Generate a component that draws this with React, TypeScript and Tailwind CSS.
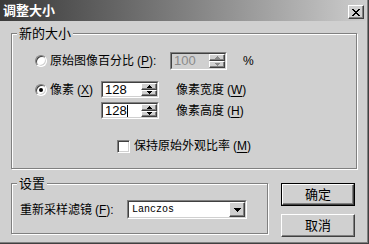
import React from 'react';

function Arrow({ down, color }: { down?: boolean; color: string }) {
  return (
    <svg width="5" height="3" viewBox="0 0 5 3" className="block" shapeRendering="crispEdges">
      {down ? (
        <>
          <rect x="0" y="0" width="5" height="1" fill={color} />
          <rect x="1" y="1" width="3" height="1" fill={color} />
          <rect x="2" y="2" width="1" height="1" fill={color} />
        </>
      ) : (
        <>
          <rect x="2" y="0" width="1" height="1" fill={color} />
          <rect x="1" y="1" width="3" height="1" fill={color} />
          <rect x="0" y="2" width="5" height="1" fill={color} />
        </>
      )}
    </svg>
  );
}

function Spin({ disabled }: { disabled?: boolean }) {
  const c = disabled ? '#8a8a8a' : '#000000';
  return (
    <div className="flex flex-col w-[16px] shrink-0">
      <div className="flex-1 flex items-center justify-center bg-[#d0d0d0] border border-t-white border-l-white border-b-[#404040] border-r-[#404040] shadow-[inset_-1px_-1px_0_#808080]">
        <Arrow color={c} />
      </div>
      <div className="flex-1 flex items-center justify-center bg-[#d0d0d0] border border-t-white border-l-white border-b-[#404040] border-r-[#404040] shadow-[inset_-1px_-1px_0_#808080]">
        <Arrow down color={c} />
      </div>
    </div>
  );
}

function Field({ className, inner, children }: { className: string; inner: string; children: React.ReactNode }) {
  return (
    <div className={`flex shrink-0 border border-t-[#808080] border-l-[#808080] border-b-white border-r-white ${className}`}>
      <div className={`flex flex-1 min-w-0 border border-t-[#404040] border-l-[#404040] border-b-[#d0d0d0] border-r-[#d0d0d0] ${inner}`}>
        {children}
      </div>
    </div>
  );
}

function Radio({ checked }: { checked?: boolean }) {
  return (
    <div className="w-[12px] h-[12px] shrink-0 rounded-full bg-white border border-t-[#808080] border-l-[#808080] border-b-white border-r-white shadow-[inset_1px_1px_0_#404040,inset_-1px_-1px_0_#d0d0d0] flex items-center justify-center">
      {checked && <div className="w-[4px] h-[4px] rounded-full bg-black" />}
    </div>
  );
}

function Key({ k }: { k: string }) {
  return (
    <span className="ml-[3px]">
      (<u className="underline-offset-2">{k}</u>)
    </span>
  );
}

export default function App() {
  return (
    <div className="w-[369px] h-[244px] overflow-hidden bg-[#d0d0d0] border-r border-b border-r-[#404040] border-b-[#404040] shadow-[inset_-1px_-1px_0_#808080] flex flex-col text-[12px] text-black font-['Liberation_Sans','Noto_Sans_CJK_SC',sans-serif]">
      {/* title bar */}
      <div className="h-[21px] mr-[2px] flex items-start bg-linear-to-r from-[#3a3a3a] to-[#cdcdcd] pl-[3px] pr-[2px]">
        <span className="flex-1 text-white text-[13px] leading-[21px] font-bold">调整大小</span>
        <button className="mt-[5px] w-[16px] h-[14px] bg-[#d0d0d0] border border-t-white border-l-white border-b-[#404040] border-r-[#404040] shadow-[inset_-1px_-1px_0_#808080] flex items-center justify-center">
          <svg width="8" height="7" viewBox="0 0 8 7" shapeRendering="crispEdges">
            <path d="M0 0h2v1h-2zM6 0h2v1h-2zM1 1h2v1h-2zM5 1h2v1h-2zM2 2h4v1h-4zM3 3h2v1h-2zM2 4h4v1h-4zM1 5h2v1h-2zM5 5h2v1h-2zM0 6h2v1h-2zM6 6h2v1h-2z" fill="#000" />
          </svg>
        </button>
      </div>

      <div className="flex flex-col pl-[11px]">
        {/* 新的大小 */}
        <fieldset className="mt-[5px] w-[346px] border border-[#808080] shadow-[1px_1px_0_#ffffff,inset_1px_1px_0_#ffffff] pt-[11px] pb-[13px]">
          <legend className="ml-[5px] px-[2px] text-[13px] leading-[15px] bg-[#d0d0d0]">新的大小</legend>

          <div className="flex items-center h-[18px] pl-[23px]">
            <Radio />
            <span className="ml-[3px] w-[120px] whitespace-nowrap">
              原始图像百分比<Key k="P" />:
            </span>
            <Field className="w-[57px] h-[18px]" inner="bg-[#d0d0d0]">
              <span className="flex-1 pl-[2px] text-[13px] leading-[14px] text-[#8a8a8a]">100</span>
              <Spin disabled />
            </Field>
            <span className="ml-[16px]">%</span>
          </div>

          <div className="flex items-center h-[17px] mt-[11px] pl-[23px]">
            <Radio checked />
            <span className="ml-[3px] w-[51px] whitespace-nowrap">
              像素<Key k="X" />
            </span>
            <Field className="w-[58px] h-[17px]" inner="bg-white">
              <span className="flex-1 pl-[2px] text-[13px] leading-[13px]">128</span>
              <Spin />
            </Field>
            <span className="ml-[17px] whitespace-nowrap">
              像素宽度<Key k="W" />
            </span>
          </div>

          <div className="flex items-center h-[17px] mt-[4px] pl-[89px]">
            <Field className="w-[58px] h-[17px]" inner="bg-white">
              <span className="flex-1 flex items-center pl-[2px] text-[13px] leading-[13px]">
                128
                <span className="w-[1px] h-[12px] bg-black" />
              </span>
              <Spin />
            </Field>
            <span className="ml-[17px] whitespace-nowrap">
              像素高度<Key k="H" />
            </span>
          </div>

          <div className="flex items-center mt-[18px] pl-[105px]">
            <div className="w-[13px] h-[13px] shrink-0 bg-white border border-t-[#808080] border-l-[#808080] border-b-white border-r-white shadow-[inset_1px_1px_0_#404040,inset_-1px_-1px_0_#d0d0d0]" />
            <span className="ml-[4px] whitespace-nowrap">
              保持原始外观比率<Key k="M" />
            </span>
          </div>
        </fieldset>

        <div className="flex items-start mt-[7px]">
          {/* 设置 */}
          <fieldset className="w-[257px] border border-[#808080] shadow-[1px_1px_0_#ffffff,inset_1px_1px_0_#ffffff] pt-[9px] pb-[14px]">
            <legend className="ml-[5px] px-[2px] text-[13px] leading-[15px] bg-[#d0d0d0]">设置</legend>
            <div className="flex items-center pl-[8px]">
              <span className="w-[107px] whitespace-nowrap">
                重新采样滤镜<Key k="F" />:
              </span>
              <Field className="w-[120px] h-[19px]" inner="bg-white items-center">
                <span className="flex-1 pl-[3px] text-[10px] leading-[15px] font-['Liberation_Mono',monospace]">Lanczos</span>
                <div className="w-[16px] h-[15px] bg-[#d0d0d0] border border-t-white border-l-white border-b-[#404040] border-r-[#404040] shadow-[inset_-1px_-1px_0_#808080] flex items-center justify-center">
                  <svg width="7" height="4" viewBox="0 0 7 4" shapeRendering="crispEdges">
                    <path d="M0 0h7v1h-7zM1 1h5v1h-5zM2 2h3v1h-3zM3 3h1v1h-1z" fill="#000" />
                  </svg>
                </div>
              </Field>
            </div>
          </fieldset>

          <div className="ml-[13px] mt-[7px] flex flex-col gap-[8px]">
            <button className="w-[74px] h-[23px] border border-black flex">
              <span className="flex-1 flex items-center justify-center bg-[#d0d0d0] border border-t-white border-l-white border-b-[#404040] border-r-[#404040] shadow-[inset_-1px_-1px_0_#808080] text-[13px]">
                确定
              </span>
            </button>
            <button className="w-[74px] h-[23px] flex items-center justify-center bg-[#d0d0d0] border border-t-white border-l-white border-b-[#404040] border-r-[#404040] shadow-[inset_-1px_-1px_0_#808080] text-[13px]">
              取消
            </button>
          </div>
        </div>
      </div>
    </div>
  );
}
